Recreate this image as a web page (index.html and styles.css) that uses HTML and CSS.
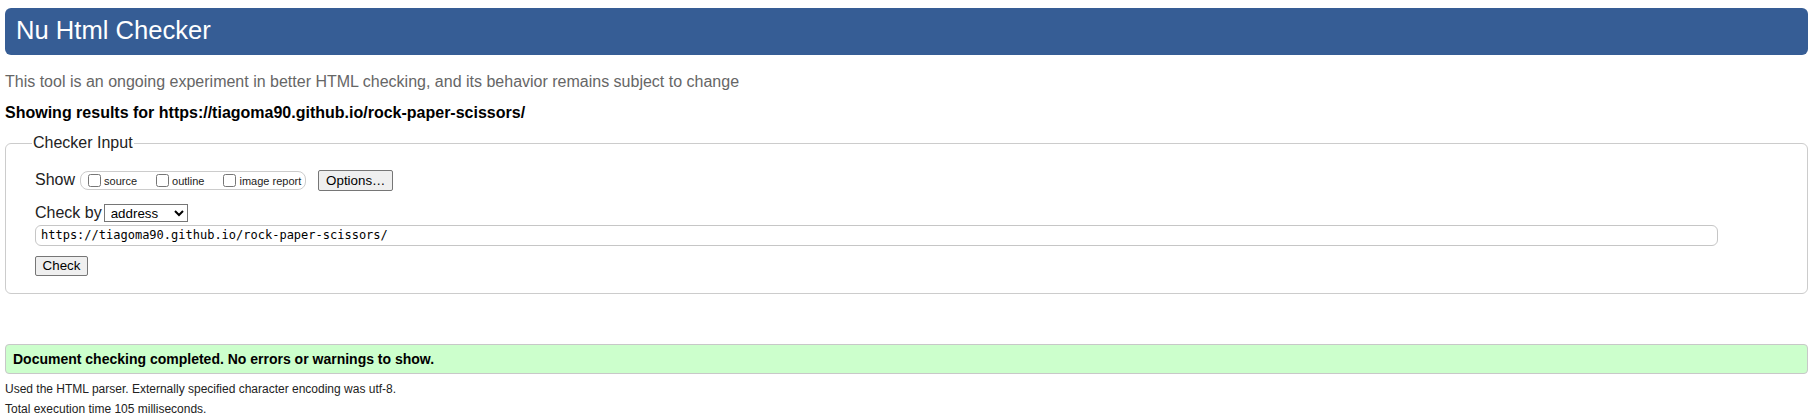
FILE: index.html
```html
<!DOCTYPE html>
<html lang="en">
<head>
<meta charset="utf-8">
<title>Nu Html Checker</title>
<link rel="stylesheet" href="styles.css">
</head>
<body>
<h1 class="title">Nu Html Checker</h1>
<p class="tagline">This tool is an ongoing experiment in better HTML checking, and its behavior remains subject to change</p>
<p class="showing">Showing results for https://tiagoma90.github.io/rock-paper-scissors/</p>
<fieldset class="checker">
  <legend class="checker-legend">Checker Input</legend>
  <div class="row show-row">
    <span class="row-label">Show</span>
    <fieldset class="show-options">
      <input type="checkbox" class="cb" id="cb-source"><label class="opt" for="cb-source">source</label>
      <input type="checkbox" class="cb" id="cb-outline"><label class="opt" for="cb-outline">outline</label>
      <input type="checkbox" class="cb" id="cb-image"><label class="opt last" for="cb-image">image report</label>
    </fieldset>
    <button class="btn options-btn" type="button">Options…</button>
  </div>
  <div class="row checkby-row">
    <span class="row-label">Check by</span>
    <select class="checkby-select">
      <option>address</option>
    </select>
  </div>
  <input class="url-input" type="text" value="https://tiagoma90.github.io/rock-paper-scissors/">
  <div class="submit-row">
    <button class="btn check-btn" type="button">Check</button>
  </div>
</fieldset>
<div class="success">Document checking completed. No errors or warnings to show.</div>
<p class="meta first">Used the HTML parser. Externally specified character encoding was utf-8.</p>
<p class="meta">Total execution time 105 milliseconds.</p>
</body>
</html>
```
FILE: styles.css
```css
html, body {
  background: #fff;
}
body {
  margin: 0;
  padding: 8px 7px 0 5px;
  font-family: "Liberation Sans", Arial, sans-serif;
  color: #000;
}
.title {
  margin: 0;
  height: 47px;
  box-sizing: border-box;
  padding: 0 0 2px 11px;
  display: flex;
  align-items: center;
  background: #365d95;
  color: #fff;
  border-radius: 6px;
  font-size: 25.6px;
  font-weight: normal;
}
.tagline {
  margin: 18px 0 0;
  font-size: 16px;
  color: #666;
}
.showing {
  margin: 12.5px 0 0;
  font-size: 16px;
  font-weight: bold;
}
.checker {
  margin: 12.5px 0 0;
  padding: 17.5px 89px 17px 29px;
  border: 1px solid #ccc;
  border-radius: 6px;
  min-width: 0;
}
.checker-legend {
  margin-left: -3px;
  padding: 0 1px;
  font-size: 16px;
  color: #222;
}
.row {
  display: flex;
  align-items: center;
}
.row-label {
  font-size: 16px;
  color: #222;
}
.show-row {
  height: 21px;
}
.show-options {
  margin: 0 0 0 5px;
  padding: 0 4px 0 3px;
  height: 19px;
  box-sizing: border-box;
  border: 1px solid #ccc;
  border-radius: 8px;
  display: flex;
  align-items: center;
  min-width: 0;
}
.cb {
  width: 13px;
  height: 13px;
  margin: 0 3px 0 4px;
}
.opt {
  font-size: 11px;
  margin-right: 15px;
  color: #222;
  position: relative;
  top: 1px;
}
.opt.last {
  margin-right: 0;
}
.btn {
  font-family: "Liberation Sans", Arial, sans-serif;
  font-size: 13.333px;
  color: #000;
  background: #efefef;
  border: 1px solid #767676;
  border-radius: 2px;
  padding: 0 6px;
  box-sizing: border-box;
}
.options-btn {
  margin-left: 12px;
  height: 21px;
  width: 75px;
}
.checkby-row {
  margin-top: 12px;
  height: 20px;
}
.checkby-select {
  margin-left: 2px;
  width: 84px;
  height: 18px;
  font-family: "Liberation Sans", Arial, sans-serif;
  font-size: 13.333px;
  border: 1px solid #767676;
  border-radius: 0;
  background: #fff;
  color: #000;
  padding: 0 0 0 2px;
}
.url-input {
  display: block;
  margin-top: 2px;
  width: 100%;
  height: 21px;
  box-sizing: border-box;
  border: 1px solid #c6c6c6;
  border-radius: 6px;
  padding: 0 5px;
  font-family: "DejaVu Sans Mono", "Liberation Mono", monospace;
  font-size: 12px;
  color: #000;
  background: #fff;
}
.submit-row {
  margin-top: 10px;
  height: 20px;
}
.check-btn {
  height: 20px;
  width: 53px;
}
.success {
  margin-top: 50.5px;
  height: 30px;
  box-sizing: border-box;
  display: flex;
  align-items: center;
  padding-left: 7px;
  background: #ccffcc;
  border: 1px solid #c8c8c8;
  border-radius: 4px;
  font-size: 14px;
  font-weight: bold;
}
.meta {
  margin: 6px 0 0;
  font-size: 12px;
  color: #222;
}
.meta.first {
  margin-top: 8px;
}
```
